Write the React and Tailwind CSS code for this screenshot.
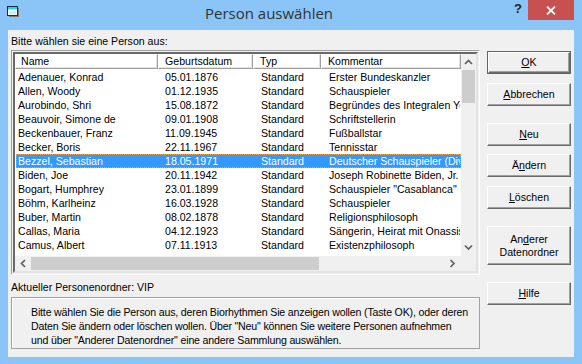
import React from 'react';

const people = [
  ['Adenauer, Konrad', '05.01.1876', 'Standard', 'Erster Bundeskanzler'],
  ['Allen, Woody', '01.12.1935', 'Standard', 'Schauspieler'],
  ['Aurobindo, Shri', '15.08.1872', 'Standard', 'Begründes des Integralen Yoga'],
  ['Beauvoir, Simone de', '09.01.1908', 'Standard', 'Schriftstellerin'],
  ['Beckenbauer, Franz', '11.09.1945', 'Standard', 'Fußballstar'],
  ['Becker, Boris', '22.11.1967', 'Standard', 'Tennisstar'],
  ['Bezzel, Sebastian', '18.05.1971', 'Standard', 'Deutscher Schauspieler (Divertimento)'],
  ['Biden, Joe', '20.11.1942', 'Standard', 'Joseph Robinette Biden, Jr.'],
  ['Bogart, Humphrey', '23.01.1899', 'Standard', 'Schauspieler "Casablanca"'],
  ['Böhm, Karlheinz', '16.03.1928', 'Standard', 'Schauspieler'],
  ['Buber, Martin', '08.02.1878', 'Standard', 'Religionsphilosoph'],
  ['Callas, Maria', '04.12.1923', 'Standard', 'Sängerin, Heirat mit Onassis'],
  ['Camus, Albert', '07.11.1913', 'Standard', 'Existenzphilosoph'],
];

const SELECTED = 6;

const btn =
  'flex items-center justify-center text-center bg-[#f0f0f0] border border-t-white border-l-white border-r-[#696969] border-b-[#696969] shadow-[inset_-1px_-1px_0_#a0a0a0]';

const headCell =
  'h-full flex items-center whitespace-nowrap overflow-hidden border border-t-white border-l-white border-r-[#a0a0a0] border-b-[#a0a0a0] shadow-[inset_-1px_-1px_0_#e3e3e3]';

const Chevron = ({ dir }) => {
  const d = {
    up: 'M1 5 L4.5 1.5 L8 5',
    down: 'M1 1.5 L4.5 5 L8 1.5',
    left: 'M5 1 L1.5 4.5 L5 8',
    right: 'M1.5 1 L5 4.5 L1.5 8',
  }[dir];
  const horiz = dir === 'left' || dir === 'right';
  return (
    <svg width={horiz ? 7 : 9} height={horiz ? 9 : 7} viewBox={horiz ? '0 0 7 9' : '0 0 9 7'}>
      <path d={d} stroke="#606060" strokeWidth="1.7" fill="none" />
    </svg>
  );
};

const U = ({ children }) => <span className="underline underline-offset-[1px]">{children}</span>;

export default function App() {
  return (
    <div
      className="w-[582px] h-[364px] bg-[#8bc4f6] flex flex-col overflow-hidden text-black"
      style={{ fontFamily: '"Liberation Sans", Arial, sans-serif' }}
    >
      {/* title bar */}
      <div className="h-[30px] flex items-start shrink-0">
        <div className="ml-[7px] mt-[6px]">
          <svg width="13" height="12" viewBox="0 0 13 12">
            <rect x="2" y="2" width="10" height="9" fill="#7a7a7a" />
            <rect x="0.5" y="0.5" width="10" height="9" fill="#ffffff" stroke="#1a2a4a" />
            <rect x="1" y="1" width="9" height="2.5" fill="#2ad0f0" />
            <rect x="2" y="5" width="7" height="3.5" fill="#bff3ff" />
          </svg>
        </div>
        <div
          className="flex-1 text-center pl-[4px] mt-[3px] text-[15px] leading-[20px] text-[#333]"
          style={{ fontFamily: '"Open Sans", "Noto Sans", sans-serif' }}
        >
          Person auswählen
        </div>
        <div className="w-[14px] mt-[1px] text-[13px] font-bold text-[#222] leading-[16px]">?</div>
        <div className="w-[46px] h-[20px] mr-[8px] bg-[#c75050] flex items-center justify-center">
          <svg width="10" height="9" viewBox="0 0 10 9">
            <path d="M1 0.5 L9 8.5 M9 0.5 L1 8.5" stroke="#fff" strokeWidth="1.8" />
          </svg>
        </div>
      </div>

      {/* client area */}
      <div className="flex-1 mx-[8px] mb-[7px] bg-[#f0f0f0] flex text-[10.6px]">
        <div className="ml-[3px] w-[469px] flex flex-col">
          <div className="mt-[4px] h-[14px] leading-[14px]">Bitte wählen sie eine Person aus:</div>

          <div className="mt-[2px] h-[225px] border border-[#a0a0a0] border-r-white border-b-white p-[1px]">
            <div className="h-full border-2 border-t-[#696969] border-l-[#696969] border-r-[#e3e3e3] border-b-[#e3e3e3] bg-white flex">
              <div className="w-[446px] flex flex-col">
                <div className="h-[15px] flex leading-[13px]">
                  <div className={`${headCell} w-[143px] pl-[5px]`}>Name</div>
                  <div className={`${headCell} w-[95px] pl-[6px]`}>Geburtsdatum</div>
                  <div className={`${headCell} w-[68px] pl-[6px]`}>Typ</div>
                  <div className={`${headCell} w-[140px] pl-[6px]`}>Kommentar</div>
                </div>
                <div className="flex-1 pt-[1px] overflow-hidden">
                  {people.map((p, i) => (
                    <div
                      key={p[0]}
                      className={`h-[14px] leading-[12px] flex ml-[1px] ${
                        i === SELECTED
                          ? 'bg-[#3399ff] text-white border border-dotted border-[#e8a04c]'
                          : 'border border-transparent'
                      }`}
                    >
                      <div className="w-[142px] pl-[1px] whitespace-nowrap overflow-hidden">{p[0]}</div>
                      <div className="w-[95px] pl-[6px] whitespace-nowrap overflow-hidden">{p[1]}</div>
                      <div className="w-[68px] pl-[7px] whitespace-nowrap overflow-hidden">{p[2]}</div>
                      <div className="w-[138px] pl-[7px] whitespace-nowrap overflow-hidden">{p[3]}</div>
                    </div>
                  ))}
                </div>
                {/* horizontal scrollbar */}
                <div className="h-[15px] bg-[#f0f0f0] flex items-center">
                  <div className="w-[16px] h-full flex items-center justify-center">
                    <Chevron dir="left" />
                  </div>
                  <div className="w-[288px] h-[13px] bg-[#cdcdcd]" />
                  <div className="flex-1" />
                  <div className="w-[17px] h-full flex items-center justify-center">
                    <Chevron dir="right" />
                  </div>
                </div>
              </div>
              {/* vertical scrollbar */}
              <div className="w-[15px] flex flex-col bg-[#f0f0f0]">
                <div className="h-[16px] flex items-center justify-center">
                  <Chevron dir="up" />
                </div>
                <div className="h-[33px] mx-[1px] bg-[#cdcdcd]" />
                <div className="flex-1" />
                <div className="h-[17px] flex items-center justify-center">
                  <Chevron dir="down" />
                </div>
                <div className="h-[15px] bg-[#f0f0f0]" />
              </div>
            </div>
          </div>

          <div className="mt-[5px] h-[14px] leading-[14px]">Aktueller Personenordner: VIP</div>

          <div className="mt-[3px] h-[52px] border border-[#a0a0a0] shadow-[inset_1px_1px_0_#fff] pl-[19px] pt-[7px] leading-[14px] whitespace-nowrap tracking-[-0.17px]">
            Bitte wählen Sie die Person aus, deren Biorhythmen Sie anzeigen wollen (Taste OK), oder deren
            <br />
            Daten Sie ändern oder löschen wollen. Über "Neu" können Sie weitere Personen aufnehmen
            <br />
            und über "Anderer Datenordner" eine andere Sammlung auswählen.
          </div>
        </div>

        <div className="ml-[7px] w-[84px] flex flex-col">
          <div className="mt-[21px] h-[23px] border border-[#646464] flex">
            <div className={`${btn} flex-1`}>
              <U>O</U>K
            </div>
          </div>
          <div className={`${btn} mt-[9px] h-[23px]`}>
            <U>A</U>bbrechen
          </div>
          <div className={`${btn} mt-[17px] h-[23px]`}>
            <U>N</U>eu
          </div>
          <div className={`${btn} mt-[8px] h-[23px]`}>
            Ä<U>n</U>dern
          </div>
          <div className={`${btn} mt-[9px] h-[23px]`}>
            <U>L</U>öschen
          </div>
          <div className={`${btn} mt-[17px] h-[39px] leading-[13px]`}>
            <span>
              An<U>d</U>erer
              <br />
              Datenordner
            </span>
          </div>
          <div className={`${btn} mt-[17px] h-[23px]`}>
            <U>H</U>ilfe
          </div>
        </div>
      </div>
    </div>
  );
}
